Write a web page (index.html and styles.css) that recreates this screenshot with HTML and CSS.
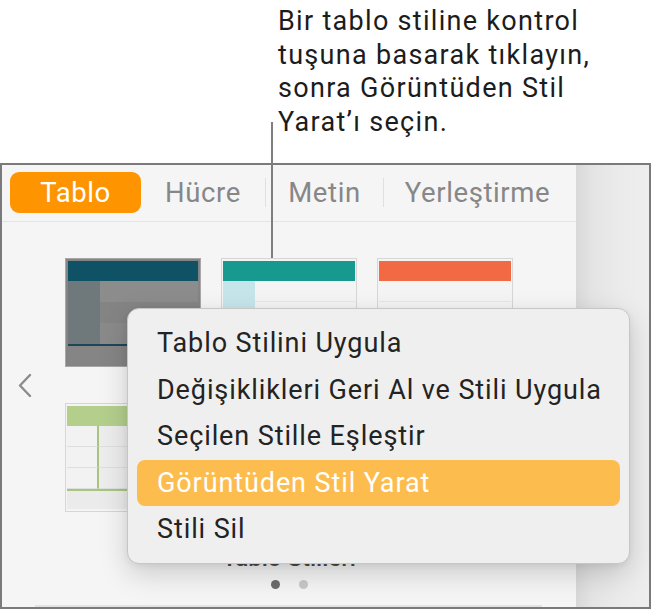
FILE: index.html
```html
<!DOCTYPE html>
<html lang="tr">
<head>
<meta charset="utf-8">
<title>Tablo Stilleri</title>
<link rel="stylesheet" href="styles.css">
</head>
<body>
<div class="page">
  <div class="callout">
    <p class="callout-text">Bir tablo stiline kontrol<br>tuşuna basarak tıklayın,<br>sonra Görüntüden Stil<br>Yarat’ı seçin.</p>
  </div>

  <div class="frame">
    <div class="panel">
      <div class="tabbar">
        <div class="tab tab-tablo active">Tablo</div>
        <div class="tab tab-hucre">Hücre</div>
        <div class="sep"></div>
        <div class="tab tab-metin">Metin</div>
        <div class="sep"></div>
        <div class="tab tab-yer">Yerleştirme</div>
      </div>

      <div class="gallery">
        <div class="nav nav-left">
          <svg width="16" height="24" viewBox="0 0 16 24"><polyline points="13,2 3,12.5 13,23" fill="none" stroke="#8c8c8c" stroke-width="2.4" stroke-linecap="round" stroke-linejoin="round"/></svg>
        </div>
        <div class="grid">
          <div class="thumb t-dark">
            <div class="h"></div>
            <div class="c"></div><div class="r r1"></div>
            <div class="c"></div><div class="r r2"></div>
            <div class="c"></div><div class="r r3"></div>
            <div class="f"></div>
          </div>
          <div class="thumb t-teal">
            <div class="h"></div>
            <div class="c"></div><div class="r r1"></div>
            <div class="c"></div><div class="r r2"></div>
            <div class="c"></div><div class="r r3"></div>
            <div class="f"></div>
          </div>
          <div class="thumb t-orange">
            <div class="h"></div>
            <div class="c"></div><div class="r r1"></div>
            <div class="c"></div><div class="r r2"></div>
            <div class="c"></div><div class="r r3"></div>
            <div class="f"></div>
          </div>
          <div class="thumb t-green">
            <div class="h"></div>
            <div class="c"></div><div class="r r1"></div>
            <div class="c"></div><div class="r r2"></div>
            <div class="c"></div><div class="r r3"></div>
            <div class="f"></div>
          </div>
          <div class="thumb t-blue">
            <div class="h"></div>
            <div class="c"></div><div class="r r1"></div>
            <div class="c"></div><div class="r r2"></div>
            <div class="c"></div><div class="r r3"></div>
            <div class="f"></div>
          </div>
          <div class="thumb t-gray">
            <div class="h"></div>
            <div class="c"></div><div class="r r1"></div>
            <div class="c"></div><div class="r r2"></div>
            <div class="c"></div><div class="r r3"></div>
            <div class="f"></div>
          </div>
        </div>
        <div class="nav nav-right">
          <svg width="16" height="24" viewBox="0 0 16 24"><polyline points="3,2 13,12.5 3,23" fill="none" stroke="#8c8c8c" stroke-width="2.4" stroke-linecap="round" stroke-linejoin="round"/></svg>
        </div>
      </div>

      <div class="label">Tablo Stilleri</div>
      <div class="dots"><span class="dot on"></span><span class="dot"></span></div>
      <div class="bottom-bar"></div>
    </div>
    <div class="side"></div>
  </div>

  <div class="callout-line"></div>

  <div class="menu">
    <div class="item">Tablo Stilini Uygula</div>
    <div class="item">Değişiklikleri Geri Al ve Stili Uygula</div>
    <div class="item">Seçilen Stille Eşleştir</div>
    <div class="item selected">Görüntüden Stil Yarat</div>
    <div class="item">Stili Sil</div>
  </div>
</div>
</body>
</html>
```

FILE: styles.css
```css
* { box-sizing: border-box; }

html, body {
  margin: 0;
  padding: 0;
  background: #ffffff;
}

body {
  font-family: Roboto, "Liberation Sans", sans-serif;
  width: 652px;
  height: 609px;
  overflow: hidden;
}

.page {
  position: relative;
  width: 652px;
  height: 609px;
}

/* ---------- callout ---------- */
.callout {
  height: 163px;
  padding: 5px 0 0 278px;
}

.callout-text {
  margin: 0;
  font-size: 27px;
  line-height: 33.5px;
  letter-spacing: 1.3px;
  color: #1c1c1c;
  white-space: nowrap;
}

.callout-line {
  position: absolute;
  left: 271px;
  top: 122px;
  width: 2px;
  height: 136px;
  background: #7e7e7e;
}

/* ---------- frame ---------- */
.frame {
  width: 651px;
  height: 446px;
  border: 2px solid #7a7a7a;
  display: flex;
}

.panel {
  width: 574px;
  background: #f5f5f5;
  display: flex;
  flex-direction: column;
}

.side {
  flex: 1;
  background: linear-gradient(90deg, #d8d8d8 0, #e4e4e4 16px, #ebebeb 60%, #eeeeee 100%);
}

/* ---------- tabs ---------- */
.tabbar {
  height: 57px;
  padding: 7px 0 8px 8px;
  border-bottom: 1px solid #e4e4e4;
  display: flex;
  align-items: center;
}

.tab {
  height: 41px;
  display: flex;
  align-items: center;
  justify-content: center;
  font-size: 27.5px;
  letter-spacing: 0.6px;
  color: #878787;
  white-space: nowrap;
}

.tab.active {
  background: #fe9500;
  color: #ffffff;
  border-radius: 9px;
}

.tab-tablo { width: 131px; }
.tab-hucre { width: 124px; }
.tab-metin { width: 117px; }
.tab-yer { width: 187px; }

.sep {
  width: 1px;
  height: 29px;
  background: #e0e0e0;
}

/* ---------- gallery ---------- */
.gallery {
  padding-top: 36px;
  display: flex;
  align-items: center;
}

.nav {
  width: 63px;
  display: flex;
  align-items: center;
}

.nav-left { padding-left: 15px; }
.nav-right { padding-left: 40px; }

.grid {
  display: grid;
  grid-template-columns: repeat(3, 136px);
  grid-template-rows: 109px 109px;
  column-gap: 20px;
  row-gap: 36px;
}

.thumb {
  border: 1px solid #d6d6d6;
  padding: 2px 1px;
  display: grid;
  grid-template-columns: 32px 1fr;
  grid-template-rows: 20px 21px 21px 21px 1fr;
  background: #f4f4f4;
}

.thumb .h { grid-column: 1 / 3; }
.thumb .f { grid-column: 1 / 3; }

/* dark / dimmed */
.t-dark { background: #848484; border-color: #a7a7a7; padding: 2px; }
.t-dark .h { background: #0f5165; }
.t-dark .c { background: #6f787b; }
.t-dark .r1 { background: #8c8c8c; }
.t-dark .r2 { background: #848484; }
.t-dark .r3 { background: #8a8a8a; }
.t-dark .f { background: #858585; border-top: 2px solid #1f4657; }

/* teal */
.t-teal .h { background: #17998f; }
.t-teal .c { background: #c6e5ea; }
.t-teal .r { background: #f4f4f4; border-bottom: 1px solid #e6e6e6; }
.t-teal .f { background: #efefef; }

/* orange */
.t-orange .h { background: #f16a43; }
.t-orange .c { background: #f4f4f4; border-bottom: 1px solid #e6e6e6; }
.t-orange .r { background: #f4f4f4; border-bottom: 1px solid #e6e6e6; }
.t-orange .f { background: #efefef; }

/* green */
.t-green .h { background: #b4cf8c; }
.t-green .c { background: #f2f2f2; border-right: 2px solid #a8c57e; border-bottom: 1px solid #dedede; }
.t-green .r { background: #ededed; border-bottom: 1px solid #dedede; }
.t-green .f { background: #ebebeb; border-top: 2px solid #a8c57e; }

/* hidden under the menu */
.t-blue .h { background: #2f6fa8; }
.t-blue .c { background: #dbe6f1; }
.t-blue .f { background: #eeeeee; }
.t-gray .h { background: #5b5b5b; }
.t-gray .c { background: #e2e2e2; }
.t-gray .f { background: #eeeeee; }

/* ---------- label & dots ---------- */
.label {
  margin-top: 32px;
  height: 28px;
  line-height: 28px;
  font-size: 24px;
  font-weight: 500;
  color: #4a4a4a;
  text-align: center;
}

.dots {
  margin-top: 7.5px;
  height: 9px;
  display: flex;
  justify-content: center;
  gap: 19px;
}

.dot {
  width: 9px;
  height: 9px;
  border-radius: 50%;
  background: #c9c9c9;
}

.dot.on { background: #6d6d6d; }

.bottom-bar {
  margin-top: 16.5px;
  margin-left: 33px;
  width: 507px;
  height: 2px;
  background: #e3e3e3;
}

/* ---------- context menu ---------- */
.menu {
  position: absolute;
  left: 127px;
  top: 308px;
  width: 503px;
  height: 256px;
  padding: 11px 9px 10px 9px;
  background: #efefef;
  border: 1px solid #c6c6c6;
  border-radius: 12px;
  box-shadow: 0 10px 28px rgba(0, 0, 0, 0.17), 0 2px 6px rgba(0, 0, 0, 0.06);
}

.item {
  height: 46.5px;
  line-height: 46.5px;
  padding-left: 20px;
  font-size: 27px;
  letter-spacing: 0.9px;
  color: #232323;
  white-space: nowrap;
  border-radius: 8px;
}

.item.selected {
  background: #fdbd4e;
  color: #ffffff;
}
```
